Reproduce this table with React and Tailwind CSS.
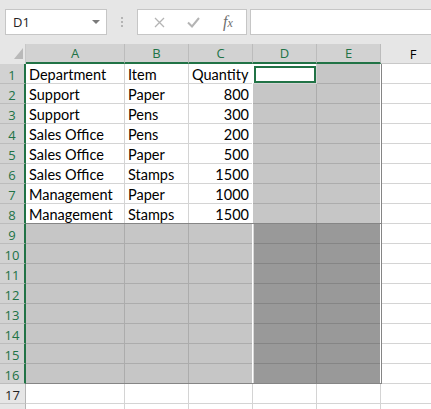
import React from "react";

const cols = [
  { k: "A", w: "w-[99px]" },
  { k: "B", w: "w-[64px]" },
  { k: "C", w: "w-[64px]" },
  { k: "D", w: "w-[64px]" },
  { k: "E", w: "w-[64px]" },
];

const data = [
  ["Department", "Item", "Quantity"],
  ["Support", "Paper", "800"],
  ["Support", "Pens", "300"],
  ["Sales Office", "Pens", "200"],
  ["Sales Office", "Paper", "500"],
  ["Sales Office", "Stamps", "1500"],
  ["Management", "Paper", "1000"],
  ["Management", "Stamps", "1500"],
];

function cellClass(r, c) {
  if (c === 5) return "bg-white border-[#d4d4d4]";
  if (r >= 9 && r <= 16) {
    if (c >= 3) return "bg-[#999999] border-[#858585]";
    return "bg-[#c6c6c6] border-[#acacac]";
  }
  if (r >= 1 && r <= 8 && c >= 3) {
    if (r === 1 && c === 3) return "bg-white border-[#d4d4d4]";
    return "bg-[#c6c6c6] border-[#acacac]";
  }
  return "bg-white border-[#d4d4d4]";
}

export default function App() {
  const rows = Array.from({ length: 18 }, (_, i) => i + 1);
  return (
    <div className="w-[431px] h-[409px] overflow-hidden bg-white font-['Lato',sans-serif] text-black">
      {/* toolbar */}
      <div className="h-[44px] bg-[#e6e6e6] flex items-start pt-[9px]">
        <div className="ml-[5px] w-[102px] h-[26px] border border-[#c6c6c6] bg-white flex items-center justify-between pl-[7px] pr-[6px]">
          <span className="font-['Open_Sans',sans-serif] text-[13px] text-[#222] leading-none">D1</span>
          <svg width="8" height="5" viewBox="0 0 8 5"><path d="M0 0 L8 0 L4 4 Z" fill="#7a7a7a" /></svg>
        </div>
        <div className="w-[30px] h-[26px] flex flex-col items-center justify-center gap-[2px]">
          <div className="w-[2px] h-[2px] bg-[#b4b4b4]" />
          <div className="w-[2px] h-[2px] bg-[#b4b4b4]" />
          <div className="w-[2px] h-[2px] bg-[#b4b4b4]" />
        </div>
        <div className="w-[110px] h-[26px] border border-[#c6c6c6] bg-white flex items-center">
          <div className="w-[38px] flex justify-center pl-[4px]">
            <svg width="11" height="11" viewBox="0 0 11 11"><path d="M1 1 L10 10 M10 1 L1 10" stroke="#b4b4b4" strokeWidth="1.3" /></svg>
          </div>
          <div className="w-[34px] flex justify-center">
            <svg width="13" height="11" viewBox="0 0 13 11"><path d="M1 5.5 L5 9.5 L12 1" stroke="#b4b4b4" strokeWidth="2" fill="none" /></svg>
          </div>
          <div className="w-[36px] flex justify-center">
            <span className="font-['Liberation_Serif',serif] italic text-[16px] text-[#6e6e6e] leading-none">f<span className="text-[12px]">x</span></span>
          </div>
        </div>
        <div className="ml-[3px] flex-1 h-[26px] border border-[#c6c6c6] bg-white mr-[-4px]" />
      </div>

      {/* header row */}
      <div className="flex h-[20px] font-['Open_Sans',sans-serif] text-[13px]">
        <div className="w-[26px] shrink-0 h-[20px] bg-[#e6e6e6] border-r border-[#c8c8c8] relative">
          <svg className="absolute left-[14px] top-[4px]" width="9" height="11" viewBox="0 0 9 11"><path d="M0 11 L9 0 L9 11 Z" fill="#b9b9b9" /></svg>
        </div>
        {cols.map((c) => (
          <div
            key={c.k}
            className={`${c.w} shrink-0 h-[20px] bg-[#d2d2d2] border-r border-[#bcbcbc] border-b-2 border-b-[#217346] flex items-center justify-center text-[#217346] leading-none pt-[1px]`}
          >
            {c.k}
          </div>
        ))}
        <div className="flex-1 min-w-0 overflow-hidden h-[20px] bg-[#e6e6e6] border-b border-[#c8c8c8] flex items-center">
          <div className="w-[64px] shrink-0 flex justify-center leading-none pt-[2px]">F</div>
        </div>
      </div>

      {/* body */}
      <div className="relative">
        {rows.map((r) => {
          const sel = r <= 16;
          const d = data[r - 1];
          return (
            <div key={r} className="flex h-[20px]">
              <div
                className={`w-[26px] shrink-0 h-[20px] border-b flex items-center justify-center font-['Open_Sans',sans-serif] text-[13px] leading-none pt-[3px] ${
                  sel
                    ? "bg-[#d2d2d2] border-[#bcbcbc] border-r-2 border-r-[#217346] text-[#217346]"
                    : "bg-[#e6e6e6] border-[#c8c8c8] border-r border-r-[#b4b4b4] text-[#222]"
                }`}
              >
                {r <= 17 ? r : ""}
              </div>
              {cols.map((c, ci) => (
                <div
                  key={c.k}
                  className={`${c.w} shrink-0 h-[20px] border-r border-b ${cellClass(r, ci)} flex items-end pb-0 px-[3px] text-[14.5px] leading-[17px] whitespace-nowrap overflow-visible ${
                    ci === 2 && r > 1 ? "justify-end" : "justify-start"
                  }`}
                >
                  {d && ci < 3 ? d[ci] : ""}
                </div>
              ))}
              <div className={`flex-1 min-w-0 h-[20px] border-b ${cellClass(r, 5)}`} />
            </div>
          );
        })}
        {/* active cell */}
        <div className="absolute left-[254px] top-[2px] w-[62px] h-[17px] border-2 border-[#217346]" />
        {/* selection outlines */}
        <div className="absolute left-[252px] top-[0px] w-[129px] h-[320px] border-l border-r border-b border-white" />
        <div className="absolute left-[26px] top-[159px] w-[355px] h-[1px] bg-[#858585]" />
        <div className="absolute left-[26px] top-[319px] w-[355px] h-[1px] bg-[#858585]" />
        <div className="absolute left-[253px] top-[160px] w-[1px] h-[159px] bg-[#d8d8d8]" />
        <div className="absolute left-[381px] top-[0px] w-[1px] h-[320px] bg-[#858585]" />
      </div>
    </div>
  );
}
